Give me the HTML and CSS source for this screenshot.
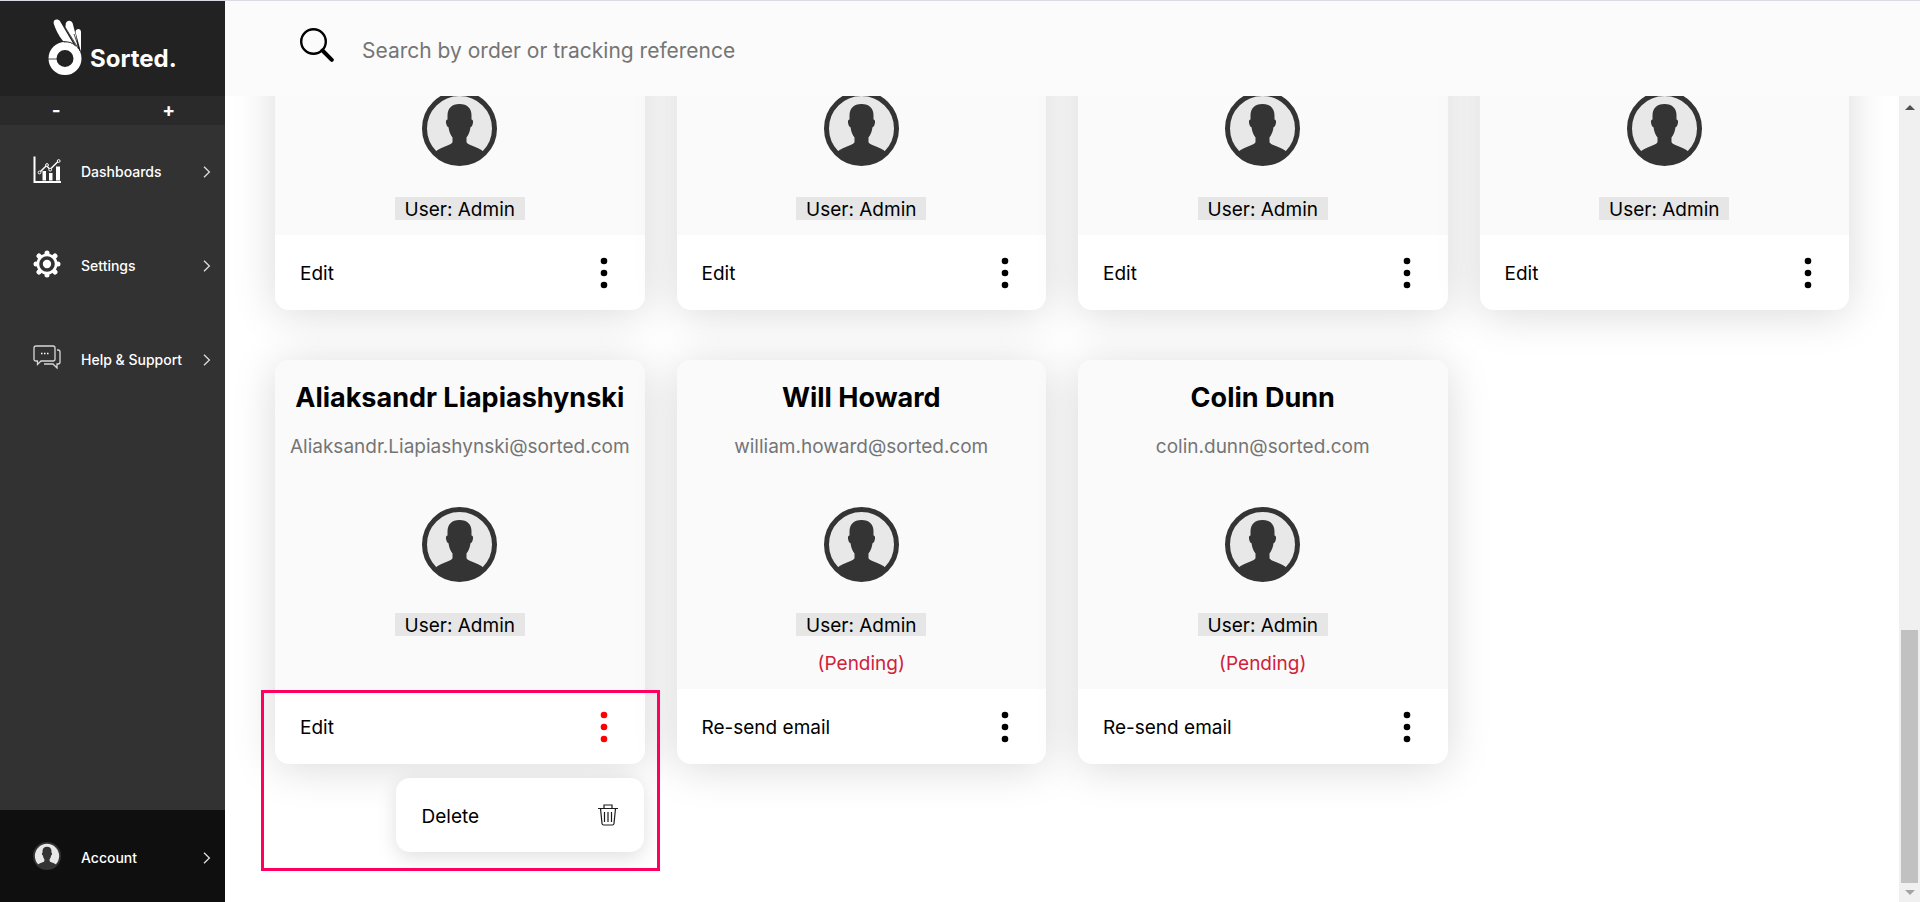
FILE: index.html
```html
<!DOCTYPE html>
<html lang="en">
<head>
<meta charset="utf-8">
<title>Sorted - Users</title>
<link rel="stylesheet" href="styles.css">
</head>
<body>
<svg class="defs" aria-hidden="true">
  <symbol id="avatar" viewBox="0 0 75 75">
    <circle cx="37.5" cy="37.5" r="35" fill="#e8e8e8"/>
    <path fill="#343434" d="M37.5 13c-8 0-12 4.500-12 11.500v4c-1.400.2-1.700 1.500-1.500 3 .3 2.500 1.200 4.500 2.500 4.800.5 4.200 2 7.700 4 10.200v4.500c-.4 1.400-2 2.200-4.500 3.200-5 1.800-9.500 3.600-13.500 7.300a35 35 0 0 0 50 0c-4-3.700-8.500-5.500-13.500-7.300-2.500-1-4.100-1.800-4.500-3.200v-4.500c2-2.500 3.500-6 4-10.200 1.300-.3 2.200-2.300 2.500-4.800.2-1.500-.1-2.800-1.500-3v-4c0-7-4-11.500-12-11.500z"/>
    <circle cx="37.5" cy="37.500" r="35" fill="none" stroke="#343434" stroke-width="5"/>
  </symbol>
  <symbol id="dots" viewBox="0 0 8 32">
    <circle cx="4" cy="4" r="3.300"/><circle cx="4" cy="16" r="3.300"/><circle cx="4" cy="28" r="3.300"/>
  </symbol>
  <symbol id="chevron" viewBox="0 0 8 12">
    <path d="M1 .7 6.400 6 1 11.300" fill="none" stroke="#dedede" stroke-width="1.300"/>
  </symbol>
</svg>

<div class="app">
  <aside class="sidebar">
    <a class="logo" href="#">
      <svg class="logo-hand" viewBox="0 0 34 58" aria-hidden="true">
        <path fill="#fff" d="M5.700 5.500C4.700 1.300 10 0 12.200 3.500L28 30.500 23 24.500 15 23C10 17 7.500 11 5.700 5.500zM17.700 7C17 2 23.500 1 24.700 5.500L28 18 30 31 17.200 9.500zM27.500 14c.2-4 5.500-4 5.500 0v20z"/>
        <circle cx="17" cy="40.500" r="12.500" fill="none" stroke="#fff" stroke-width="8"/>
        <path d="M16 24q7-1 11.500 4M0 41h9M16.700 8.500l14 22.500M26 16l6 17" fill="none" stroke="#222" stroke-width=".8"/>
      </svg>
      <span class="logo-name">Sorted.</span>
    </a>
    <div class="resize">
      <button type="button" class="resize-button">-</button>
      <button type="button" class="resize-button">+</button>
    </div>
    <nav class="nav">
      <a class="nav-item" href="#">
        <svg class="nav-icon" viewBox="0 0 28 28" aria-hidden="true">
          <path d="M1.500.500v25.500H28" fill="none" stroke="#fff" stroke-width="2"/>
          <path d="M9.500 15h3.500v9.500H9.500zM16 17h3.500v7.500H16zM23 10.500h4v14h-4z" fill="#fff"/>
          <path d="m7 16 6.500-6.500 3.500 4 8-8" fill="none" stroke="#fff" stroke-width="1.500"/>
          <g fill="#323232" stroke="#fff"><circle cx="6.500" cy="16.500" r="1.400"/><circle cx="14" cy="9" r="1.400"/><circle cx="17.200" cy="13.700" r="1.400"/><circle cx="25.700" cy="5" r="1.400"/></g>
        </svg>
        <span class="nav-label">Dashboards</span>
        <svg class="chevron" aria-hidden="true"><use href="#chevron"/></svg>
      </a>
      <a class="nav-item" href="#">
        <svg class="nav-icon" viewBox="0 0 28 28" aria-hidden="true">
          <g stroke="#fff" stroke-width="5" stroke-linecap="round">
            <path d="M14 3v22M3 14h22M6 6l16 16M22 6 6 22"/>
          </g>
          <circle cx="14" cy="14" r="10.500" fill="#fff"/>
          <circle cx="14" cy="14" r="6" fill="#fff" stroke="#323232" stroke-width="3.600"/>
        </svg>
        <span class="nav-label">Settings</span>
        <svg class="chevron" aria-hidden="true"><use href="#chevron"/></svg>
      </a>
      <a class="nav-item" href="#">
        <svg class="nav-icon" viewBox="0 0 28 28" aria-hidden="true">
          <path d="M3 2h17q2 0 2 2v11q0 2-2 2H8l-3.500 3.500V17H3q-2 0-2-2V4q0-2 2-2zM24 6h1q2 0 2 2v10q0 2-2 2h-1v4l-4-4h-9" fill="none" stroke="#d8d8d8" stroke-width="1.300"/>
          <path d="M8 9.500h1.500M11 9.500h1.500M14 9.500h1.500" stroke="#fff" stroke-width="1.500"/>
        </svg>
        <span class="nav-label">Help &amp; Support</span>
        <svg class="chevron" aria-hidden="true"><use href="#chevron"/></svg>
      </a>
    </nav>
    <a class="nav-item account" href="#">
      <svg class="nav-icon" aria-hidden="true"><use href="#avatar"/></svg>
      <span class="nav-label">Account</span>
      <svg class="chevron" aria-hidden="true"><use href="#chevron"/></svg>
    </a>
  </aside>

  <div class="page">
    <header class="topbar">
      <label class="search">
        <svg class="search-icon" viewBox="0 0 34 34" aria-label="Search">
          <circle cx="13.500" cy="13.500" r="12.300" fill="none" stroke="#000" stroke-width="2.400"/>
          <path d="m22.500 22.500 9.300 9.300" stroke="#000" stroke-width="4" stroke-linecap="round"/>
        </svg>
        <input class="search-input" type="search" placeholder="Search by order or tracking reference">
      </label>
    </header>

    <div class="scroller">
      <main class="content">
        <ul class="cards">
          <li class="card"><div class="card-body"><svg class="avatar"><use href="#avatar"/></svg><span class="role">User: Admin</span></div>
            <div class="card-footer"><a class="action" href="#">Edit</a><button type="button" class="more" aria-label="More"><svg class="dots"><use href="#dots"/></svg></button></div></li>
          <li class="card"><div class="card-body"><svg class="avatar"><use href="#avatar"/></svg><span class="role">User: Admin</span></div>
            <div class="card-footer"><a class="action" href="#">Edit</a><button type="button" class="more" aria-label="More"><svg class="dots"><use href="#dots"/></svg></button></div></li>
          <li class="card"><div class="card-body"><svg class="avatar"><use href="#avatar"/></svg><span class="role">User: Admin</span></div>
            <div class="card-footer"><a class="action" href="#">Edit</a><button type="button" class="more" aria-label="More"><svg class="dots"><use href="#dots"/></svg></button></div></li>
          <li class="card"><div class="card-body"><svg class="avatar"><use href="#avatar"/></svg><span class="role">User: Admin</span></div>
            <div class="card-footer"><a class="action" href="#">Edit</a><button type="button" class="more" aria-label="More"><svg class="dots"><use href="#dots"/></svg></button></div></li>

          <li class="card">
            <div class="card-body">
              <h2 class="name">Aliaksandr Liapiashynski</h2>
              <p class="email">Aliaksandr.Liapiashynski@sorted.com</p>
              <svg class="avatar"><use href="#avatar"/></svg>
              <span class="role">User: Admin</span>
              <span class="status"></span>
            </div>
            <div class="card-footer"><a class="action" href="#">Edit</a><button type="button" class="more more-open" aria-label="More" aria-expanded="true"><svg class="dots"><use href="#dots"/></svg></button></div>
            <button type="button" class="menu">
              <span class="action">Delete</span>
              <svg class="trash" viewBox="0 0 20 22" aria-hidden="true"><path d="M0 4.500h20M6 4.500V1h8v3.500M2.500 4.500 4 19.500q.2 1.500 1.700 1.500h8.600q1.500 0 1.700-1.500l1.500-15M6.500 8v10M10 8v10M13.500 8v10" fill="none" stroke="#1c1c1c" stroke-width="1.200"/></svg>
            </button>
            <span class="highlight"></span>
          </li>
          <li class="card">
            <div class="card-body">
              <h2 class="name">Will Howard</h2>
              <p class="email">william.howard@sorted.com</p>
              <svg class="avatar"><use href="#avatar"/></svg>
              <span class="role">User: Admin</span>
              <span class="status">(Pending)</span>
            </div>
            <div class="card-footer"><a class="action" href="#">Re-send email</a><button type="button" class="more" aria-label="More"><svg class="dots"><use href="#dots"/></svg></button></div>
          </li>
          <li class="card">
            <div class="card-body">
              <h2 class="name">Colin Dunn</h2>
              <p class="email">colin.dunn@sorted.com</p>
              <svg class="avatar"><use href="#avatar"/></svg>
              <span class="role">User: Admin</span>
              <span class="status">(Pending)</span>
            </div>
            <div class="card-footer"><a class="action" href="#">Re-send email</a><button type="button" class="more" aria-label="More"><svg class="dots"><use href="#dots"/></svg></button></div>
          </li>
        </ul>
      </main>
      <div class="scrollbar" aria-hidden="true">
        <svg class="arrow" viewBox="0 0 10 5"><path d="M0 5 5 0l5 5z" fill="#505050"/></svg>
        <div class="thumb"></div>
        <svg class="arrow" viewBox="0 0 10 5"><path d="m0 0 5 5 5-5z" fill="#a3a3a3"/></svg>
      </div>
    </div>
  </div>
</div>
</body>
</html>
```

FILE: styles.css
```css
* { box-sizing: border-box; }

body {
  margin: 0;
  font-family: Inter, "Liberation Sans", sans-serif;
  font-size: 19px;
  line-height: 24px;
  color: #000;
  background: #fff;
}

a { color: inherit; text-decoration: none; }

button {
  padding: 0;
  border: 0;
  background: none;
  font: inherit;
  color: inherit;
}

.defs { position: absolute; width: 0; height: 0; }

.app {
  display: flex;
  height: 100vh;
  border-top: 1px solid #dadbe0;
}

/* Sidebar */
.sidebar {
  display: flex;
  flex: none;
  flex-direction: column;
  width: 225px;
  background: #323232;
  color: #fff;
}

.logo {
  display: flex;
  gap: 8px;
  height: 95px;
  padding: 17px 0 0 48px;
  background: #222;
}

.logo-hand { width: 34px; height: 58px; }

.logo-name {
  padding-top: 25px;
  font-size: 24px;
  line-height: 32px;
  font-weight: 700;
}

.resize {
  display: grid;
  grid-template-columns: 1fr 1fr;
  height: 29px;
  background: #2a2a2a;
}

.resize-button { font-weight: 700; }

.nav { flex: 1; }

.nav-item {
  display: flex;
  align-items: center;
  height: 94px;
  padding: 0 14px 0 33px;
}

.nav-icon { width: 28px; height: 28px; margin-bottom: 4px; }

.nav-label {
  flex: 1;
  padding-left: 20px;
  font-size: 14px;
  font-weight: 500;
}

.chevron { width: 8px; height: 12px; }

.account { height: 92px; padding-top: 3px; background: #0f0f0f; }

/* Page */
.page {
  display: flex;
  flex: 1;
  flex-direction: column;
  min-width: 0;
}

.topbar {
  flex: none;
  height: 95px;
  padding: 27px 75px;
  background: #fbfbfb;
}

.search { display: flex; gap: 28px; }

.search-icon { flex: none; width: 34px; height: 34px; }

.search-input {
  flex: 1;
  height: 34px;
  margin-top: 5px;
  padding: 0;
  border: 0;
  outline: 0;
  background: none;
  font: inherit;
  font-size: 21px;
}

.search-input::placeholder { color: #757575; opacity: 1; }

.scroller { display: flex; flex: 1; min-height: 0; }

.content {
  display: flex;
  flex: 1;
  flex-direction: column;
  justify-content: flex-end;
  min-width: 0;
  padding: 0 50px 138px;
  overflow: hidden;
}

.cards {
  display: grid;
  grid-template-columns: repeat(4, minmax(0, 1fr));
  gap: 50px 32px;
  margin: 0;
  padding: 0;
  list-style: none;
}

.card {
  position: relative;
  border-radius: 14px;
  background: #fff;
  box-shadow: 0 4px 44px rgba(0, 0, 0, 0.15);
}

.card-body {
  display: flex;
  flex-direction: column;
  align-items: center;
  padding: 20px 0 13px;
  border-radius: 14px 14px 0 0;
  background: #fafafa;
}

.card-body > .avatar:first-child { margin-top: 35px; }
.card-body > .role:nth-child(2) { margin-bottom: 2px; }

.name {
  margin: 0;
  font-size: 27px;
  line-height: 36px;
  font-weight: 700;
  white-space: nowrap;
}

.email { margin: 19px 0 48px; color: #757575; white-space: nowrap; }

.avatar { width: 75px; height: 75px; }

.role {
  margin-top: 31px;
  padding: 2px 10px 0;
  background: #e6e6e6;
  line-height: 21px;
}

.status { height: 24px; margin-top: 16px; color: #d0213b; }

.card-footer {
  display: flex;
  align-items: center;
  justify-content: space-between;
  height: 75px;
  padding: 0 37px 0 25px;
}

.action { padding-top: 3px; }

.more { display: flex; }

.dots { width: 8px; height: 32px; }

.more-open { fill: #f00; }

/* Overlays of the open card */
.menu {
  position: absolute;
  z-index: 1;
  top: calc(100% + 14px);
  right: 1px;
  display: flex;
  align-items: center;
  justify-content: space-between;
  width: 248px;
  height: 74px;
  padding: 0 26px;
  border-radius: 14px;
  background: #fff;
  box-shadow: 0 5px 20px rgba(0, 0, 0, 0.13);
}

.trash { width: 20px; height: 22px; }

.highlight {
  position: absolute;
  z-index: 2;
  top: calc(100% - 74px);
  right: -15px;
  left: -14px;
  height: 181px;
  border: 3px solid #ff0062;
  pointer-events: none;
}

/* Scrollbar */
.scrollbar {
  display: flex;
  flex: none;
  flex-direction: column;
  align-items: center;
  width: 21px;
  padding: 9px 2px 7px;
  background: #f0f0f0;
}

.arrow { width: 10px; height: 5px; }

.thumb {
  width: 100%;
  height: 253px;
  margin: auto 0 7px;
  background: #c1c1c1;
}
```
